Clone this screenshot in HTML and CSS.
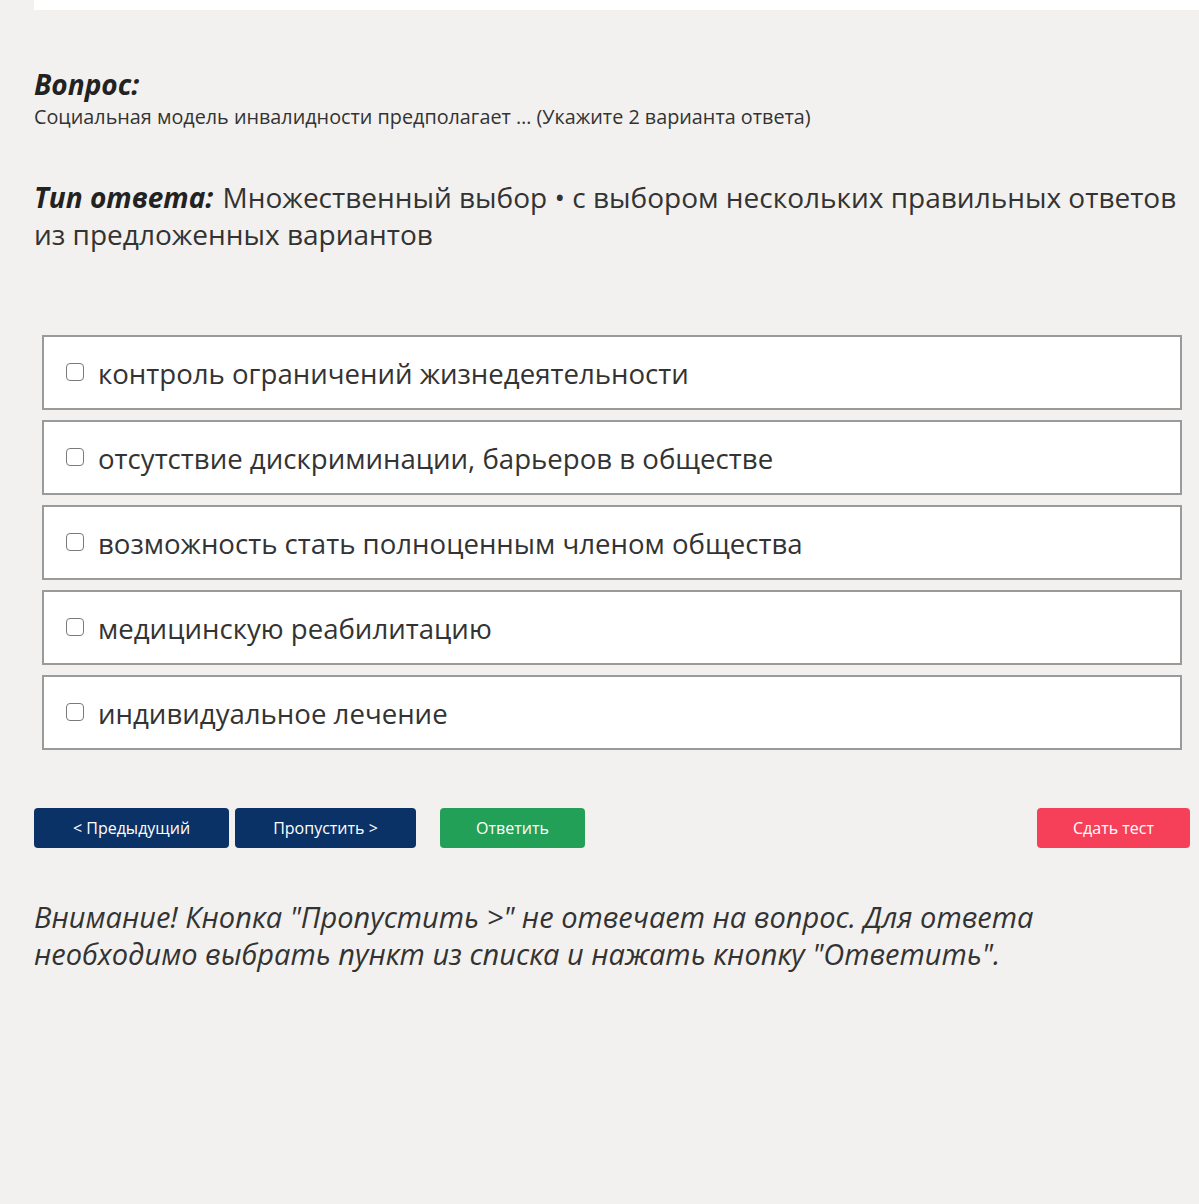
FILE: index.html
```html
<!DOCTYPE html>
<html>
<head>
	<meta http-equiv="Content-Type" content="text/html; charset=utf-8" />
	<meta name="viewport" content="width=device-width, initial-scale=1">
<title>Тест</title>
<link rel="stylesheet" href="styles.css">
</head>
<body>

<div class="topbar"></div>

<div class="wrap">
	<div class="qhead">Вопрос:</div>
	<div class="qtext">Социальная модель инвалидности предполагает … (Укажите 2 варианта ответа)</div>

	<div class="atype"><b>Тип ответа:</b> Множественный выбор • с выбором нескольких правильных ответов из предложенных вариантов</div>

	<div class="opts">
		<label class="opt"><input type="checkbox"><span>контроль ограничений жизнедеятельности</span></label>
		<label class="opt"><input type="checkbox"><span>отсутствие дискриминации, барьеров в обществе</span></label>
		<label class="opt"><input type="checkbox"><span>возможность стать полноценным членом общества</span></label>
		<label class="opt"><input type="checkbox"><span>медицинскую реабилитацию</span></label>
		<label class="opt"><input type="checkbox"><span>индивидуальное лечение</span></label>
	</div>

	<div class="btns">
		<button class="btn navy prev">&lt; Предыдущий</button>
		<button class="btn navy skip">Пропустить &gt;</button>
		<button class="btn green answer">Ответить</button>
		<button class="btn red finish">Сдать тест</button>
	</div>

	<div class="warn">Внимание! Кнопка "Пропустить &gt;" не отвечает на вопрос. Для ответа необходимо выбрать пункт из списка и нажать кнопку "Ответить".</div>
</div>

</body>
</html>
```

FILE: styles.css
```css
body{
	margin:0px;
	padding:0px;
	background:#f2f1ef;
	font-family:"Open Sans","Noto Sans",sans-serif;
	color:#222;
}
.topbar{
	height:10px;
	margin-left:34px;
	background:#fff;
}
.wrap{
	padding:0 9px 0 34px;
}
.qhead{
	margin-top:56px;
	font-size:28px;
	font-weight:bold;
	font-style:italic;
	line-height:36px;
}
.qtext{
	margin-top:2px;
	font-size:19.8px;
	line-height:26px;
	color:#333;
}
.atype{
	margin-top:49px;
	font-size:28px;
	line-height:37px;
	color:#333;
}
.atype b{
	font-style:italic;
	font-weight:700;
	color:#222;
	margin-right:2px;
}
.opts{
	margin:82px 8px 0 8px;
	display:flex;
	flex-direction:column;
	gap:10px;
}
.opt{
	display:flex;
	align-items:center;
	height:71px;
	background:#fff;
	border:2px solid #9a9a9a;
	font-size:27.6px;
	color:#333;
}
.opt input{
	appearance:none;
	-webkit-appearance:none;
	box-sizing:border-box;
	width:18px;
	height:18px;
	margin:0 14px 2px 22px;
	border:1.5px solid #7a7a7a;
	border-radius:4px;
	background:#fff;
}
.btns{
	margin-top:58px;
	display:flex;
	gap:6px;
}
.btn{
	height:40px;
	border:none;
	border-radius:4px;
	color:#fff;
	font-family:inherit;
	font-size:16px;
}
.navy{ background:#0b3266; }
.green{ background:#23a057; margin-left:18px; }
.red{ background:#f6405a; margin-left:auto; }
.prev{ width:195px; }
.skip{ width:181px; }
.answer{ width:145px; }
.finish{ width:153px; }
.warn{
	margin-top:50px;
	font-size:29px;
	font-style:italic;
	line-height:37px;
	color:#333;
	max-width:1060px;
}
```
